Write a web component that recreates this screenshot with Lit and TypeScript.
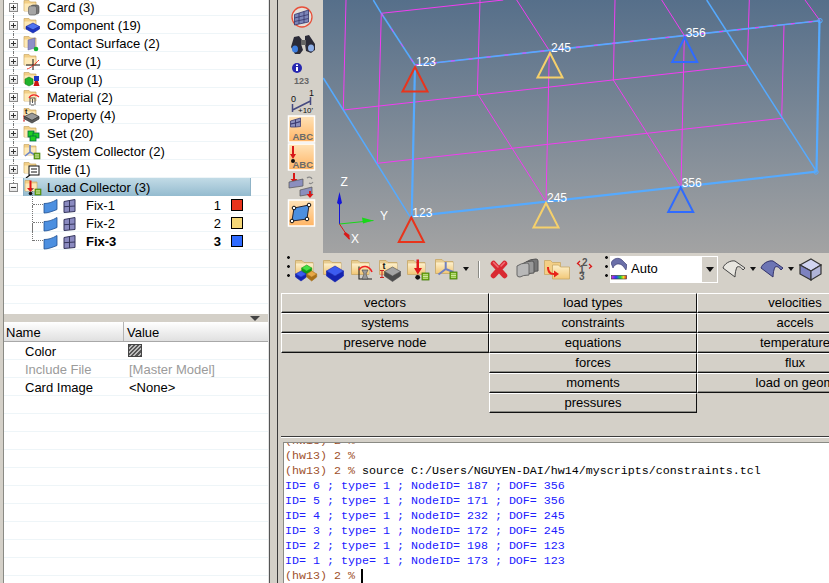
import { LitElement, html, css, svg } from 'lit';
import { customElement } from 'lit/decorators.js';

const folder = svg`
  <path d="M1 1.500h5l1.500 1.500H13v9H1z" fill="#f3cf86" stroke="#c8a765" stroke-width=".7"/>
  <path d="M1.500 4.500h11V12h-11z" fill="#fde9b8"/>`;

const barFolder = svg`
  <path d="M.5 3.500h6.500l2 2h9v12H.5z" fill="#e8cc90" stroke="#c8a765" stroke-width=".8"/>
  <path d="M1 6.500h17V17H1z" fill="url(#fold)"/>`;

const greenList = svg`
  <rect x="11" y="10" width="6" height="6" fill="#6aa51c" stroke="#3f7a08" stroke-width=".6"/>
  <path d="M12 11.700h4M12 13h4M12 14.300h4" stroke="#e4f5c0" stroke-width=".7"/>`;

const barList = (x: number, y: number) => svg`
  <rect x=${x} y=${y} width="7" height="7" fill="#7ab51c" stroke="#3f7a08" stroke-width=".8"/>
  <path d="M${x + 1} ${y + 1.800}h5M${x + 1} ${y + 3.500}h5M${x + 1} ${y + 5.200}h5" stroke="#e4f5c0" stroke-width=".8"/>`;

// a block seen from above: top face, then the two lower sides
const gem = (cx: number, cy: number, w: number, h: number, top: string, side: string) => svg`
  <path d="M${cx - w} ${cy}v${h}l${w} ${h + 1}l${w} ${-h - 1}v${-h}l${-w} ${h}z" fill=${side} stroke=${side} stroke-width=".6"/>
  <path d="M${cx - w} ${cy}l${w} ${-h}l${w} ${h}l${-w} ${h}z" fill=${top} stroke=${side} stroke-width=".6"/>`;

const slab = svg`
  <path d="M9 6l7 3.500-7 4-7.500-4z" fill="#9a9a9a" stroke="#333" stroke-width=".7"/>
  <path d="M1.500 9.500V12l7.500 4 7-4V9.500l-7 4z" fill="#5c5c5c" stroke="#333" stroke-width=".7"/>`;

const loadArrow = svg`
  <path d="M5.500 1.500h2V9H10l-3.500 4L3 9h2.500z" fill="#e01818"/>
  <circle cx="6.500" cy="14.500" r="1.800" fill="#111"/>`;

const triad = svg`
  <path d="M7 2v7l-5 4M7 9l5 3" fill="none" stroke="#6d86c8" stroke-width="1.600"/>`;

const overlays: Record<string, unknown> = {
  card: svg`<rect x="8" y="6" width="8" height="9" rx="2" fill="#777" stroke="#444" stroke-width=".6"/>
    <rect x="5.500" y="7" width="8" height="9" rx="2" fill="#a5a5a5" stroke="#555" stroke-width=".6"/>`,
  component: svg`<path d="M10 6l6.500 3.500-6.500 3.500-7-3.500z" fill="#4f73f0" stroke="#10209a" stroke-width=".6"/>
    <path d="M3 9.500V12l7 4 6.500-4V9.500L10 13z" fill="#1c36c4" stroke="#10209a" stroke-width=".6"/>`,
  contact: svg`<path d="M5 5l7-2v10l-7 2z" fill="#8f8fc8" stroke="#5f5f98" stroke-width=".5"/>
    <circle cx="13" cy="14" r="2.300" fill="#12b030"/>`,
  curve: svg`<path d="M10 6v11M3 12h14" stroke="#111" stroke-width="1"/>
    <path d="M4 16c4-1 8-5 12-9" fill="none" stroke="#ef3a2a" stroke-width="1"/>`,
  group: svg`<path d="M2 8l4-2 4 2v5l-4 2-4-2z" fill="#22b32a" stroke="#0c6e12" stroke-width=".5"/>
    <rect x="11" y="5" width="5" height="5" fill="#1c36c4"/>
    <path d="M12 10h3l1.500 5h-6z" fill="#cc1414"/>`,
  material: svg`<path d="M7 16V9h5v7M8 16h3M9.500 10v4" fill="none" stroke="#555" stroke-width="1"/>
    <path d="M6 9c2-4 7-4 10-1" fill="none" stroke="#e22" stroke-width="1.200"/>`,
  property: svg`<text x="2" y="7" font-family="Liberation Sans" font-size="7" font-weight="700" fill="#111">t</text>
    <path d="M1 9v5M0 9h2M0 14h2" stroke="#c22" stroke-width=".8"/>${slab}`,
  set: svg`<rect x="5" y="6" width="6" height="6" fill="#20d020" stroke="#064" stroke-width=".8"/>
    <rect x="10" y="8" width="6" height="5" fill="#20d020" stroke="#064" stroke-width=".8"/>
    <rect x="7" y="11" width="6" height="5" fill="#20d020" stroke="#064" stroke-width=".8"/>`,
  system: svg`${triad}${greenList}`,
  title: svg`<rect x="6" y="5" width="10" height="9" fill="#fff" stroke="#111" stroke-width="1"/>
    <path d="M8 8h6M8 11h6" stroke="#111" stroke-width="1"/>
    <path d="M7 14l-4 3" stroke="#111" stroke-width="1.200"/>`,
  load: svg`${loadArrow}${greenList}`,
};

const barIcons = [
  svg`${barFolder}${gem(11.700, 11, 5, 3, '#44e044', '#119a11')}${gem(6, 17, 5.500, 3, '#3c5cf0', '#1424b0')}${gem(16.700, 17, 5, 3, '#e8a848', '#a87018')}`,
  svg`${barFolder}${gem(12, 14, 8.500, 5, '#3c5cf0', '#1424b0')}`,
  svg`${barFolder}
    <path d="M8 9.500V22h13" fill="none" stroke="#222" stroke-width="1.100"/>
    <path d="M8 13c3-5 10-5 13 2" fill="none" stroke="#e22" stroke-width="1.600"/>
    <path d="M11 13h6l-2 4 2 5h-6l2-5z" fill="#999" stroke="#444" stroke-width=".6"/>`,
  svg`${barFolder}
    <text x="3.500" y="12" font-family="Liberation Sans" font-size="9" font-weight="700" fill="#111">t</text>
    <path d="M3 14v6M1 13.500h4M1 20.500h4" stroke="#c22" stroke-width="1"/>
    ${gem(13.500, 14.500, 8, 4.500, '#a4a4a4', '#4c4c4c')}`,
  svg`${barFolder}
    <path d="M9.500 2.500h2.500V11h3l-4.200 6.500L7 11h2.500z" fill="#e01818"/>
    <circle cx="10.700" cy="20.300" r="2.400" fill="#111"/>${barList(15, 16)}`,
  svg`<g transform="translate(0 -1)">${barFolder}</g>
    <path d="M10.700 5v7L3.500 17.500M10.700 12l7.500 3" fill="none" stroke="#7080c0" stroke-width="2"/>${barList(15, 15)}`,
];

const folderIcon = (name: string, size = 17) => html`<svg class="ico" width=${size} height=${size} viewBox="0 0 17 17">
  ${folder}${overlays[name]}
</svg>`;

const surfaceIcon = svg`<svg class="shift" width="16" height="16" viewBox="0 0 16 16">
  <path d="M1 5.500c4 0 8-1 13-4v10c-5 2-9 3.500-13 3.500z" fill="#4c8fe0" stroke="#1f4f90" stroke-width=".8"/>
</svg>`;

const meshIcon = svg`<svg width="14" height="14" viewBox="0 0 14 14">
  <path d="M1 2.500l11-2v12l-11 1z" fill="#8a8ac0" stroke="#35355c" stroke-width="1"/>
  <path d="M6.500 1.500V13M1 7.700l11-.7" stroke="#35355c" stroke-width="1"/>
</svg>`;

const archPath = 'M1 11C2 7 8 3 13 4l10 7-2 2c-2-3-4-4-6-3-1 2-2 6-2 10z';

const TREE = [
  ['Card (3)', 'card'],
  ['Component (19)', 'component'],
  ['Contact Surface (2)', 'contact'],
  ['Curve (1)', 'curve'],
  ['Group (1)', 'group'],
  ['Material (2)', 'material'],
  ['Property (4)', 'property'],
  ['Set (20)', 'set'],
  ['System Collector (2)', 'system'],
  ['Title (1)', 'title'],
];

const LOADS = [
  { name: 'Fix-1', id: 1, color: '#e8341c', bold: false },
  { name: 'Fix-2', id: 2, color: '#f5d777', bold: false },
  { name: 'Fix-3', id: 3, color: '#2f6bff', bold: true },
];

const COLUMNS = [
  ['vectors', 'systems', 'preserve node'],
  ['load types', 'constraints', 'equations', 'forces', 'moments', 'pressures'],
  ['velocities', 'accels', 'temperature', 'flux', 'load on geom'],
];

const LOG = [
  [6, 187, 356],
  [5, 171, 356],
  [4, 232, 245],
  [3, 172, 245],
  [2, 198, 123],
  [1, 173, 123],
];

// segments of the wireframe, in page coordinates
const MAGENTA = [
  [346, 0, 343.3, 110], [381.3, 13.3, 377.3, 163.3], [480, 0, 477.3, 95], [615, 0, 613.3, 80],
  [749.3, 0, 747.3, 65], [784, 25, 781.7, 118.3], [381.3, 13.3, 503.3, 0], [415, 65, 820, 20.7],
  [343.3, 110, 747.3, 65], [377.3, 163.3, 781.7, 118.3], [516.7, 0, 550, 51.7], [549.3, 51.7, 546, 201.7],
  [661.7, 0, 685, 36.7], [684.3, 36.7, 681, 186.7], [478.3, 95, 546, 201.7], [613.3, 80, 681, 186.7],
  [805, 0, 820, 20.7],
];
const BLUE = [
  [373.3, 0, 381.3, 13.3, 1.5], [323.3, 78, 410, 216.7, 1.5], [706.7, 0, 816.7, 171.7, 1.5],
  [415, 65, 411.7, 216.7, 2.2], [819.5, 20.7, 816.5, 171.7, 2.2], [410, 216.7, 816.7, 171.7, 2.2],
];
const MIXED = [[415, 65, 820, 20.7], [381.3, 13.3, 415, 65]];
const MARKERS = [
  { x: 415, y: 67, c: '#e8341c', dof: 123 },
  { x: 550, y: 53, c: '#f5d06b', dof: 245 },
  { x: 684.7, y: 37.5, c: '#2f6bff', dof: 356 },
  { x: 411.3, y: 217.5, c: '#e8341c', dof: 123 },
  { x: 546, y: 203, c: '#f5d06b', dof: 245 },
  { x: 680.7, y: 187.5, c: '#2f6bff', dof: 356 },
];

const abcButton = (glyph: unknown) => svg`<svg width="32" height="28" viewBox="0 0 32 28">
  <rect x="2.500" y="1" width="26" height="26" fill="url(#orange)" stroke="#fff" stroke-width="1.500"/>
  ${glyph}
  <text x="27" y="24.500" text-anchor="end" font-family="Liberation Sans" font-size="9.500" font-weight="700" fill="#6b6b6b">ABC</text>
</svg>`;

@customElement('app-root')
export class AppRoot extends LitElement {
  static styles = css`
    :host {
      display: flex;
      width: 829px;
      height: 583px;
      overflow: hidden;
      background: #d4d0c8;
      color: #000;
      font: 13px/18px "Liberation Sans", sans-serif;
    }
    .left {
      flex: none;
      width: 264px;
      margin-left: 3px;
      border-left: 1px solid #8a8a84;
      border-right: 1px solid #e4e4e4;
      box-shadow: 1px 0 0 #555;
      display: flex;
      flex-direction: column;
      background: #fff;
    }
    .tree { height: 314px; overflow: hidden; flex: none; }
    .tree-inner { margin-top: -2px; }
    .row {
      height: 18px;
      box-sizing: border-box;
      border-bottom: 1px solid #eef5f8;
      display: flex;
      align-items: center;
      white-space: nowrap;
    }
    .gutter {
      position: relative;
      flex: none;
      width: 19px;
      height: 18px;
      margin-bottom: -1px;
    }
    .gutter::before {
      content: '';
      position: absolute;
      left: 9px;
      top: 0;
      bottom: 0;
      border-left: 1px dotted #777;
    }
    .gutter.last::before { bottom: 9px; }
    .box {
      position: absolute;
      left: 5px;
      top: 5px;
      width: 7px;
      height: 7px;
      border: 1px solid #8a8a8a;
      background: linear-gradient(#fff, #e4e4e4);
    }
    .box::before, .box.plus::after {
      content: '';
      position: absolute;
      background: #333;
    }
    .box::before { left: 1px; right: 1px; top: 3px; height: 1px; }
    .box.plus::after { top: 1px; bottom: 1px; left: 3px; width: 1px; }
    .ico { flex: none; overflow: visible; }
    .node { display: flex; align-items: center; height: 17px; }
    .node .ico { margin-top: 1px; }
    .label { margin-left: 7px; padding-top: 2px; }
    .selected .label { margin-left: 6px; }
    .selected {
      width: 228px;
      box-sizing: border-box;
      border: 1px solid #8fb3c7;
      border-width: 0 1px;
      background: linear-gradient(#c2dbe6, #94bbcf);
      height: 18px;
      margin-bottom: -1px;
      margin-top: -1px;
    }
    .child .gutter { width: 18px; margin-left: 10px; margin-right: 9px; }
    .child .gutter::before { left: 18px; top: -8px; }
    .child .stub {
      flex: none;
      width: 10px;
      margin-left: -8px;
      border-top: 1px dotted #777;
    }
    .child .shift { flex: none; margin-top: 2px; }
    .child .mesh { flex: none; margin: 2px 0 0 4px; display: flex; }
    .child .name { margin-left: 9px; flex: 1; padding-top: 2px; }
    .child .num { flex: none; margin-right: 10px; padding-top: 2px; }
    .child .swatch {
      flex: none;
      width: 10px;
      height: 10px;
      border: 1px solid #000;
      margin-right: 25px;
    }
    .bold { font-weight: 700; }
    .band {
      flex: none;
      height: 8px;
      background: #d4d0c8;
      display: flex;
      justify-content: flex-end;
      padding-right: 8px;
    }
    .band i {
      margin-top: 2px;
      width: 0;
      height: 0;
      border: 5px solid transparent;
      border-top: 5px solid #444;
      border-bottom: 0;
    }
    .head {
      flex: none;
      height: 20px;
      box-sizing: border-box;
      display: flex;
      border-bottom: 1px solid #a8a8a8;
      background: linear-gradient(#fff, #e0e0e0);
    }
    .head span { line-height: 21px; }
    .head .n { width: 117px; padding-left: 2px; border-right: 1px solid #b4b4b4; }
    .head .w { padding-left: 3px; }
    .prop { flex: none; }
    .prop .k { width: 102px; padding: 2px 0 0 21px; flex: none; }
    .prop .v { padding: 2px 0 0 2px; }
    .muted { color: #9b9b9b; }
    .hatch {
      width: 12px;
      height: 11px;
      margin-left: 1px;
      border: 1px solid #444;
      background: repeating-linear-gradient(135deg, #555 0 1.5px, #bbb 1.5px 3px);
    }
    .sash { flex: none; width: 8px; }
    .right {
      flex: 1;
      min-width: 0;
      border-left: 1px solid #3a3a3a;
      display: flex;
      flex-direction: column;
    }
    .top { flex: none; height: 253px; display: flex; }
    .side {
      flex: none;
      width: 45px;
      box-sizing: border-box;
      padding: 5px 0 0 8px;
      display: flex;
      flex-direction: column;
    }
    .side svg { display: block; flex: none; }
    .view { flex: 1; min-width: 0; }
    .view svg { display: block; }
    .bar {
      flex: none;
      height: 32px;
      box-sizing: border-box;
      padding-left: 9px;
      display: flex;
      align-items: center;
      gap: 4px;
      white-space: nowrap;
    }
    .bar > svg { flex: none; overflow: visible; }
    .dots {
      flex: none;
      width: 4px;
      height: 26px;
      background: radial-gradient(circle at 1.5px 1.5px, #111 1.3px, transparent 1.5px) 0 0 / 4px 9px;
    }
    .dots.tail { margin: 0 -3px 0 3px; }
    .arrow {
      flex: none;
      width: 0;
      height: 0;
      border: 3px solid transparent;
      border-top: 4px solid #111;
      border-bottom: 0;
    }
    .sep {
      flex: none;
      width: 1px;
      height: 17px;
      margin: 0 7px 0 5px;
      background: #8a8a84;
      box-shadow: 1px 0 0 #fff;
    }
    .next {
      flex: none;
      width: 1px;
      height: 11px;
      margin-left: 7px;
      background: #55554f;
    }
    .combo {
      flex: none;
      width: 108px;
      height: 27px;
      box-sizing: border-box;
      border: 1px solid #fff;
      background: #fff;
      display: flex;
      align-items: center;
    }
    .combo span { flex: 1; margin-left: 4px; }
    .combo b {
      flex: none;
      width: 15px;
      align-self: stretch;
      background: #d4d0c8;
      display: flex;
      align-items: center;
      justify-content: center;
    }
    .combo b i {
      width: 0;
      height: 0;
      border: 4px solid transparent;
      border-top: 5px solid #111;
      border-bottom: 0;
    }
    .panel {
      flex: none;
      height: 143px;
      padding: 8px 0 0 3px;
      display: flex;
      width: 700px;
    }
    .col { flex: none; width: 208px; }
    .col.wide { width: 196px; }
    .btn {
      height: 20px;
      box-sizing: border-box;
      border-top: 1px solid #fff;
      border-left: 1px solid #fff;
      border-right: 1px solid #111;
      border-bottom: 1px solid #111;
      box-shadow: inset 0 -1px 0 #8a8a84;
      text-align: center;
      line-height: 18px;
      white-space: nowrap;
    }
    .console-wrap {
      flex: 1;
      min-height: 0;
      margin-left: 3px;
      border-top: 1px solid #3a3a3a;
      padding: 5px 0 0 2px;
      box-shadow: inset 0 1px 0 #fff;
    }
    .console {
      height: 100%;
      box-sizing: border-box;
      border: 1px solid #8a8a84;
      border-right: 0;
      border-bottom: 0;
      background: #fff;
      overflow: hidden;
      padding-left: 1px;
      font: 11.67px/15px "Liberation Mono", monospace;
    }
    .line { white-space: pre; height: 15px; }
    .line.first { margin-top: -9px; }
    .prompt { color: #a0522d; }
    .out { color: #2020ff; }
    .cursor {
      display: inline-block;
      width: 2px;
      height: 15px;
      margin-left: -1px;
      vertical-align: top;
      background: #000;
    }
  `;

  renderTree() {
    return html`
      ${TREE.map(([label, key]) => html`
        <div class="row">
          <div class="gutter"><span class="box plus"></span></div>
          <div class="node">${folderIcon(key)}<span class="label">${label}</span></div>
        </div>`)}
      <div class="row">
        <div class="gutter last"><span class="box"></span></div>
        <div class="node selected">${folderIcon('load')}<span class="label">Load Collector (3)</span></div>
      </div>
      ${LOADS.map((l, i) => html`
        <div class="row child ${l.bold ? 'bold' : ''}">
          <div class="gutter ${i === 2 ? 'last' : ''}"></div>
          <span class="stub"></span>
          ${surfaceIcon}
          <span class="mesh">${meshIcon}</span>
          <span class="name">${l.name}</span>
          <span class="num">${l.id}</span>
          <span class="swatch" style="background:${l.color}"></span>
        </div>`)}
      ${[0, 1, 2].map(() => html`<div class="row"></div>`)}
    `;
  }

  renderProps() {
    return html`
      <div class="head"><span class="n">Name</span><span class="w">Value</span></div>
      <div class="row prop"><span class="k">Color</span><span class="hatch"></span></div>
      <div class="row prop muted"><span class="k">Include File</span><span class="v">[Master Model]</span></div>
      <div class="row prop"><span class="k">Card Image</span><span class="v">&lt;None&gt;</span></div>
      ${Array.from({ length: 11 }, () => html`<div class="row prop"></div>`)}
    `;
  }

  renderSide() {
    return html`
      <svg width="32" height="29" viewBox="0 0 32 29">
        <circle cx="16" cy="12" r="10" fill="#e4e0da" stroke="#e8503a" stroke-width="1.300"/>
        <path d="M8.500 9.500l14-4.500v12l-14 3z" fill="#7c86b8" stroke="#35356a" stroke-width=".8"/>
        <path d="M13 8v11M18 6.500V18M8.500 13l14-3.500M8.500 16.500l14-3" stroke="#35356a" stroke-width=".8"/>
      </svg>
      <svg width="32" height="25" viewBox="0 0 32 25">
        <path d="M8 3l5-1 3 4-1 4 2 6-3 4-5 0-4-7zM19 2l4-1 6 9 0 6-4 3-5-2-1-7z" fill="#2b2b38"/>
        <ellipse cx="9" cy="15" rx="3" ry="3.500" fill="#3f7fe0"/>
        <ellipse cx="25" cy="14" rx="3" ry="3.500" fill="#8fb0e8"/>
        <path d="M15 6h5v5h-5z" fill="#666"/>
      </svg>
      <svg width="32" height="28" viewBox="0 0 32 28">
        <circle cx="11" cy="9" r="5" fill="#2626b0"/>
        <rect x="10" y="8" width="2" height="4" fill="#fff"/>
        <rect x="10" y="5.500" width="2" height="1.500" fill="#fff"/>
        <text x="8" y="25" font-family="Liberation Sans" font-size="9" font-weight="700" fill="#666">123</text>
      </svg>
      <svg width="32" height="28" viewBox="0 0 32 28">
        <text x="5" y="15" font-family="Liberation Sans" font-size="9" fill="#111">0</text>
        <text x="23" y="9" font-family="Liberation Sans" font-size="9" fill="#111">1</text>
        <path d="M6.500 17v8M24.500 10v8M6.500 23l18-9" stroke="#454a80" stroke-width="1.500" fill="none"/>
        <text x="12" y="26" font-family="Liberation Sans" font-size="8" fill="#111">+10'</text>
      </svg>
      ${abcButton(svg`<path d="M4.500 6l5-1.500v3.500l-5 1zM9.500 4.500l5-1.500v3.500l-5 1.500zM4.500 9l5-1v4h-5zM9.500 8l5-1.500V11.500l-5 .5z" fill="#8b8fbe" stroke="#3a3a70" stroke-width=".8"/>`)}
      ${abcButton(svg`<path d="M6 3h2v8h2l-3 5-3-5h2z" fill="#d81818"/><circle cx="7" cy="18" r="2" fill="#111"/>`)}
      <svg width="32" height="28" viewBox="0 0 32 28">
        <path d="M7 2v6H4.500L8 12l3.500-4H9V2z" fill="#d81818"/>
        <path d="M3 11l14-3v7l-14 2z" fill="#8b8fbe" stroke="#555" stroke-width=".7"/>
        <path d="M14 19l12-3v7l-12 2z" fill="#8b8fbe" stroke="#555" stroke-width=".7"/>
        <path d="M21 7a3 3 0 015 1M27 11a3 3 0 01-4 1" fill="none" stroke="#888" stroke-width="1.200"/>
        <path d="M23 20v3h-2.500l3.500 4 3.500-4H25v-3z" fill="#d81818"/>
      </svg>
      <svg width="32" height="28" viewBox="0 0 32 28">
        <rect x="2.500" y="1" width="26" height="26" fill="url(#orange)" stroke="#fff" stroke-width="1.500"/>
        <path d="M8 9l15-3-2 14-15 2z" fill="#4c8fe0" stroke="#223" stroke-width="1"/>
        <g fill="#fff" stroke="#111"><circle cx="8" cy="9" r="1.800"/><circle cx="23" cy="6" r="1.800"/><circle cx="21" cy="20" r="1.800"/><circle cx="6" cy="22" r="1.800"/></g>
      </svg>
    `;
  }

  renderBar() {
    return html`
      <span class="dots"></span>
      ${barIcons.map((icon) => svg`<svg width="24" height="24" viewBox="0 0 24 24">${icon}</svg>`)}
      <span class="arrow"></span>
      <span class="sep"></span>
      <svg width="24" height="24" viewBox="0 0 24 24">
        <path d="M3.500 6.500L14.500 18.500M14.500 6.500L3.500 18.500" stroke="#d92a32" stroke-width="5.500" stroke-linecap="round"/>
        <path d="M3.500 5.500L8 10M14.500 5.500L11 9" stroke="#f07078" stroke-width="1.500" stroke-linecap="round"/>
      </svg>
      <svg width="24" height="24" viewBox="2 0 24 24">
        <path d="M10 5q4-3 10-3 2 0 2 2v10q-6 0-9 2z" fill="#777" stroke="#555"/>
        <path d="M6 7q4-3 10-3 2 0 2 2v10q-6 0-9 2z" fill="#999" stroke="#555"/>
        <path d="M1 9q4-3 10-3 2 0 2 2v10q-6 0-9 2-3 0-3-2z" fill="#b8b8b8" stroke="#666"/>
      </svg>
      <svg width="24" height="24" viewBox="2 0 24 24">
        <path d="M.5 3.500h6l2 2h8v12H.5z" fill="#f3cf86" stroke="#c8a765" stroke-width=".8"/>
        <path d="M8.500 8h6l2 2h9v12h-17z" fill="url(#fold)" stroke="#c8a765" stroke-width=".8"/>
        <path d="M5 10c0 4 2 6 5 6v-2.500l5 3.500-5 3.500V18c-5 0-7-3-7-8z" fill="#e8221a"/>
      </svg>
      <svg width="24" height="24" viewBox="0 0 24 24">
        <g font-family="Liberation Sans" font-size="10" font-weight="700" fill="#555">
          <text x="8" y="9">2</text><text x="5" y="16">1</text><text x="5" y="23">3</text>
        </g>
        <path d="M6 4L3.500 6.500 6 8.500M15 7l2.500 2.500-2.500 2" fill="none" stroke="#d81818" stroke-width="1.300"/>
      </svg>
      <span class="dots tail"></span>
      <div class="combo">
        <svg width="16" height="24" viewBox="0 0 16 24">
          <path d="M0 6C2 1 8 0 11 3l5 5-1 5-3-4C9 6 4 6 2 11z" fill="#6a6fa8" stroke="#33336a" stroke-width=".6"/>
          <rect x=".5" y="18.500" width="15" height="3.500" fill="url(#rainbow)" stroke="#333" stroke-width=".6"/>
        </svg>
        <span>Auto</span>
        <b><i></i></b>
      </div>
      <svg width="24" height="24" viewBox="0 0 24 24">
        <path d=${archPath} fill="#e8e6e0" stroke="#444" stroke-width="1"/>
      </svg>
      <span class="arrow"></span>
      <svg width="24" height="24" viewBox="0 0 24 24">
        <path d=${archPath} fill="#6d75b4" stroke="#33336a" stroke-width="1"/>
      </svg>
      <span class="arrow"></span>
      <svg width="24" height="24" viewBox="-2 0 24 24">
        <path d="M11 2l10 6-10 6L0 8z" fill="#d0d4f0" stroke="#333" stroke-width="1.200"/>
        <path d="M0 8v9l11 6V14z" fill="#7d82c0" stroke="#333" stroke-width="1.200"/>
        <path d="M21 8v9l-10 6V14z" fill="#b0b4d8" stroke="#333" stroke-width="1.200"/>
      </svg>
      <span class="next"></span>
    `;
  }

  renderView() {
    return html`
      <svg width="506" height="253" viewBox="323 0 506 253">
        <defs>
          <linearGradient id="sky" x1="0" y1="0" x2="0" y2="1">
            <stop offset="0" stop-color="#566f8a"/>
            <stop offset="1" stop-color="#a3a3a3"/>
          </linearGradient>
        </defs>
        <rect x="323" y="0" width="506" height="253" fill="url(#sky)"/>
        ${MAGENTA.map(([a, b, c, d]) => svg`<line x1=${a} y1=${b} x2=${c} y2=${d} stroke="#f23cf2" stroke-width="1"/>`)}
        ${BLUE.map(([a, b, c, d, w]) => svg`<line x1=${a} y1=${b} x2=${c} y2=${d} stroke="#55aaff" stroke-width=${w}/>`)}
        ${MIXED.map(([a, b, c, d]) => svg`
          <line x1=${a} y1=${b} x2=${c} y2=${d} stroke="#55aaff" stroke-width="1.600"/>
          <line x1=${a} y1=${b} x2=${c} y2=${d} stroke="#f23cf2" stroke-width="1" stroke-dasharray="4 14"/>`)}
        <circle cx="820" cy="20.700" r="2.200" fill="none" stroke="#55aaff"/>
        <circle cx="816" cy="172" r="2.200" fill="none" stroke="#55aaff"/>
        ${MARKERS.map((m) => svg`
          <path d="M${m.x} ${m.y}l-12.500 24.500h25z" fill="none" stroke=${m.c} stroke-width="2"/>
          <text x=${m.x + 1} y=${m.y - 1} font-family="Liberation Sans" font-size="12" fill="#fff">${m.dof}</text>`)}
        <path d="M339.500 224v-30" stroke="#1414d8" stroke-width="1"/>
        <path d="M339.500 192l2.500 11-2.500 2-2.500-2z" fill="#1414d8"/>
        <path d="M339.500 224l34-3.500" stroke="#18d818" stroke-width="1"/>
        <path d="M373 220.500l-11-3 1 6z" fill="#18d818"/>
        <path d="M339.500 224l10 15" stroke="#d81818" stroke-width="1"/>
        <path d="M349.500 240l-6-6 2-2 4 3z" fill="#d81818"/>
        <g font-family="Liberation Sans" font-size="12" fill="#fff">
          <text x="340.500" y="186">Z</text>
          <text x="380" y="220">Y</text>
          <text x="351" y="243">X</text>
        </g>
      </svg>
    `;
  }

  render() {
    return html`
      <svg width="0" height="0" style="position:absolute">
        <defs>
          <linearGradient id="orange" x1="0" y1="0" x2="0" y2="1">
            <stop offset="0" stop-color="#ffe3b8"/>
            <stop offset="1" stop-color="#ffb464"/>
          </linearGradient>
          <linearGradient id="fold" x1="0" y1="0" x2="0" y2="1">
            <stop offset="0" stop-color="#fdf0cc"/>
            <stop offset="1" stop-color="#f2c878"/>
          </linearGradient>
          <linearGradient id="rainbow">
            <stop offset="0" stop-color="#e020e0"/>
            <stop offset=".3" stop-color="#2040ff"/>
            <stop offset=".6" stop-color="#20d040"/>
            <stop offset=".8" stop-color="#f0e020"/>
            <stop offset="1" stop-color="#f02020"/>
          </linearGradient>
        </defs>
      </svg>
      <div class="left">
        <div class="tree"><div class="tree-inner">${this.renderTree()}</div></div>
        <div class="band"><i></i></div>
        ${this.renderProps()}
      </div>
      <div class="sash"></div>
      <div class="right">
        <div class="top">
          <div class="side">${this.renderSide()}</div>
          <div class="view">${this.renderView()}</div>
        </div>
        <div class="bar">${this.renderBar()}</div>
        <div class="panel">
          ${COLUMNS.map((col, i) => html`
            <div class="col ${i === 2 ? 'wide' : ''}">
              ${col.map((b) => html`<div class="btn">${b}</div>`)}
            </div>`)}
        </div>
        <div class="console-wrap">
          <div class="console">
            <div class="line first prompt">(hw13) 2 %</div>
            <div class="line prompt">(hw13) 2 %</div>
            <div class="line"><span class="prompt">(hw13) 2 % </span>source C:/Users/NGUYEN-DAI/hw14/myscripts/constraints.tcl</div>
            ${LOG.map(([id, node, dof]) => html`<div class="line out">ID= ${id} ; type= 1 ; NodeID= ${node} ; DOF= ${dof}</div>`)}
            <div class="line"><span class="prompt">(hw13) 2 % </span><span class="cursor"></span></div>
          </div>
        </div>
      </div>
    `;
  }
}
